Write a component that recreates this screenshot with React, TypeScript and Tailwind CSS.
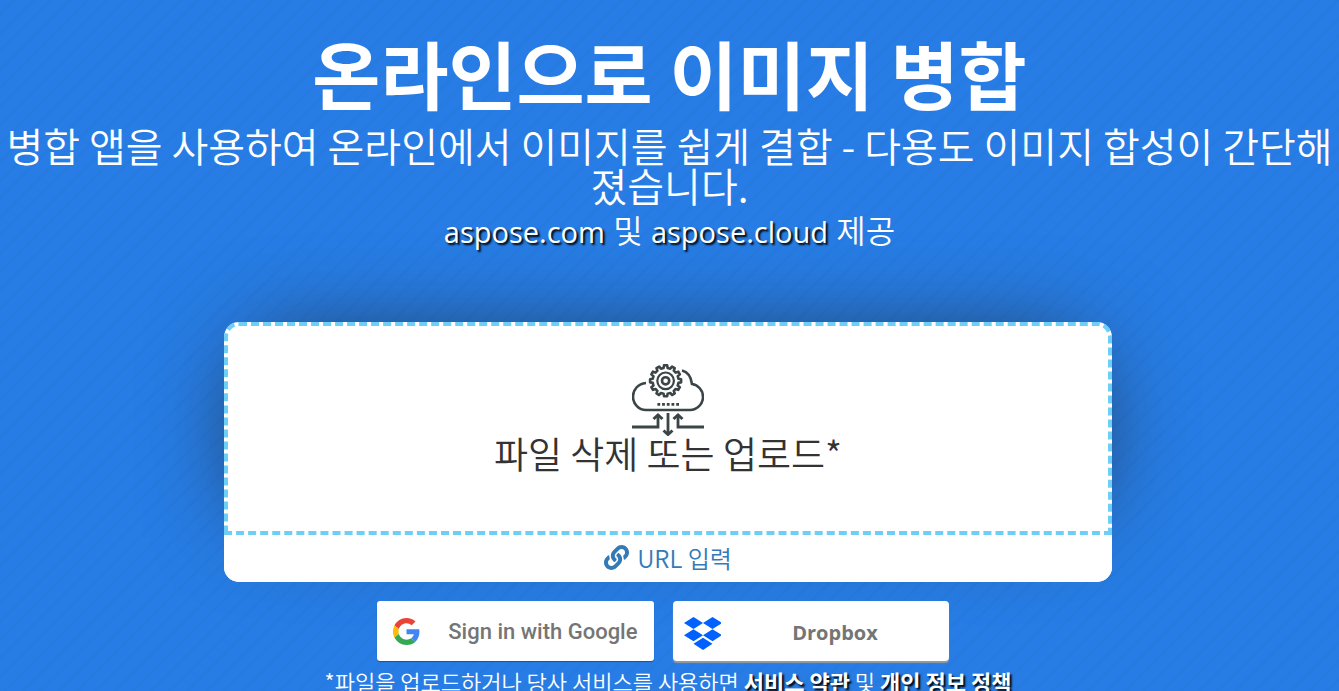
import React from "react";
import { FaLink } from "react-icons/fa";

const stripes =
  "bg-[#277de5] bg-[repeating-linear-gradient(135deg,transparent_0px,transparent_8px,rgba(0,0,0,0.025)_10px,rgba(0,0,0,0.025)_11px,transparent_13px)]";

const TEETH = 12;

function gearPath(cx: number, cy: number, inner: number, outer: number) {
  const step = (Math.PI * 2) / TEETH;
  const points: string[] = [];
  for (let i = 0; i < TEETH; i++) {
    const middle = i * step - Math.PI / 2;
    const corners: [number, number][] = [
      [inner, -0.3],
      [outer, -0.19],
      [outer, 0.19],
      [inner, 0.3],
    ];
    for (const [r, offset] of corners) {
      const angle = middle + offset * step;
      points.push(`${(cx + r * Math.cos(angle)).toFixed(2)} ${(cy + r * Math.sin(angle)).toFixed(2)}`);
    }
  }
  return `M${points.join("L")}Z`;
}

function CloudIcon() {
  return (
    <svg width="72" height="72" viewBox="0 0 72 72" fill="none" stroke="#3b4547" strokeWidth="2.6" aria-hidden="true">
      <path d="M14 19C6 19.500 1 26 1 32.500C1 40 7 46 14 46H58C65 46 71 40 71 33C71 26 66 21 60 20C59 12 56 8 50 6.500" />
      <path d={gearPath(33.6, 16.8, 13, 15.6)} strokeLinejoin="round" strokeWidth="2.6" />
      <circle cx="33.600" cy="16.800" r="8.300" strokeWidth="2.200" />
      <circle cx="33.600" cy="16.800" r="3.600" />
      <path d="M25.400 40.400H47" strokeDasharray="2.800 1.900" strokeWidth="2.800" />
      <path d="M0 63H26V52M72 63H46V52M36 49V69" strokeWidth="2.800" />
      <path d="M21.500 55L26 51L30.500 55M41.500 55L46 51L50.500 55M31.500 66.500L36 70.500L40.500 66.500" strokeWidth="3" />
    </svg>
  );
}

function GoogleIcon() {
  return (
    <svg width="27" height="27" viewBox="0 0 48 48" aria-hidden="true">
      <path fill="#EA4335" d="M24 9.500c3.540 0 6.710 1.220 9.210 3.600l6.850-6.850C35.900 2.380 30.470 0 24 0 14.620 0 6.510 5.380 2.560 13.220l7.980 6.190C12.430 13.720 17.740 9.500 24 9.500z" />
      <path fill="#4285F4" d="M46.980 24.550c0-1.570-.15-3.090-.38-4.550H24v9.020h12.940c-.58 2.960-2.260 5.480-4.780 7.180l7.730 6c4.510-4.180 7.090-10.360 7.090-17.650z" />
      <path fill="#FBBC05" d="M10.530 28.590c-.48-1.450-.76-2.990-.76-4.590s.27-3.140.76-4.590l-7.980-6.190C.92 16.460 0 20.120 0 24c0 3.880.92 7.540 2.560 10.780l7.970-6.190z" />
      <path fill="#34A853" d="M24 48c6.480 0 11.930-2.130 15.890-5.810l-7.730-6c-2.150 1.450-4.920 2.300-8.160 2.300-6.260 0-11.570-4.220-13.470-9.910l-7.980 6.190C6.510 42.620 14.620 48 24 48z" />
    </svg>
  );
}

function DropboxIcon() {
  return (
    <svg width="37" height="34" viewBox="0 0 37 34" fill="#0061ff" aria-hidden="true">
      <path d="M9.500 0L19 6L9.500 12L0 6ZM28.500 0L38 6L28.500 12L19 6ZM9.500 12.200L19 18.200L9.500 24.200L0 18.200ZM28.500 12.200L38 18.200L28.500 24.200L19 18.200ZM19 20.800L28.500 26.800L19 33L9.500 26.800Z" />
    </svg>
  );
}

const shadow = "[text-shadow:2px_2px_2px_#000]";

export default function App() {
  return (
    <main
      className={`${stripes} min-h-screen overflow-hidden text-center text-white font-['Open_Sans','Noto_Sans_CJK_KR',sans-serif]`}
    >
      <header className="pt-8">
        <h1 className="font-['Noto_Sans_CJK_KR',sans-serif] text-[74px] leading-[80px] font-bold">온라인으로 이미지 병합</h1>
        <h2 className="mt-[13px] font-['Noto_Sans_CJK_KR',sans-serif] text-[40px] leading-10 font-[350]">
          병합 앱을 사용하여 온라인에서 이미지를 쉽게 결합 - 다용도 이미지 합성이 간단해졌습니다.
        </h2>
        <p className="mt-[6px] text-[29px] leading-10">
          <a href="#aspose-com" className={shadow}>aspose.com</a>
          <span className="text-[32px] font-[350]"> 및 </span>
          <a href="#aspose-cloud" className={shadow}>aspose.cloud</a>
          <span className="text-[32px] font-[350]"> 제공</span>
        </p>
      </header>

      <div className="mt-[70px] pr-[3px]">
        <section className="mx-auto w-2/3 max-w-[888px] rounded-[15px] bg-white">
          <label className="flex h-[213px] cursor-pointer flex-col items-center rounded-t-[15px] border-4 border-dashed border-[#6dcff6] pt-[38px] shadow-[0_0_100px_-30px_#222]">
            <CloudIcon />
            <span className="font-['Noto_Sans_CJK_KR',sans-serif] text-[37px] leading-[34px] font-[350] text-[#333]">파일 삭제 또는 업로드*</span>
            <input type="file" className="sr-only" />
          </label>
          <button type="button" className="relative flex h-[47px] w-full items-center justify-center gap-2 rounded-b-[15px] bg-white pb-[2px] text-[24px] text-[#337ab7]">
            <FaLink className="size-[25px]" />
            <span className="font-['Noto_Sans_CJK_KR',sans-serif] font-[350]">URL 입력</span>
          </button>
        </section>
      </div>

      <div className="mt-[19px] mr-[14px] flex justify-center gap-[19px]">
        <button type="button" className="flex h-[60px] w-[277px] items-center rounded-[3px] bg-white px-4 text-[22px] font-medium text-[#757575] shadow-[0_1px_1px_#0005] font-['Roboto',sans-serif]">
          <GoogleIcon />
          <span className="flex-1 text-right">Sign in with Google</span>
        </button>
        <button type="button" className="flex h-[60px] w-[276px] items-center rounded-[4px] bg-white px-[11px] pt-[6px] text-[20px] font-bold text-[#757575] shadow-[0_2px_1px_#999]">
          <DropboxIcon />
          <span className="flex-1 pr-1 pb-[2px] pl-4">Dropbox</span>
        </button>
      </div>

      <p className="mt-[6px] pr-[3px] font-['Noto_Sans_CJK_KR',sans-serif] text-[22px] leading-7 font-[350]">
        *파일을 업로드하거나 당사 서비스를 사용하면 <a href="#terms" className={`${shadow} font-bold`}>서비스 약관</a> 및{" "}
        <a href="#privacy" className={`${shadow} font-bold`}>개인 정보 정책</a>
      </p>
    </main>
  );
}
